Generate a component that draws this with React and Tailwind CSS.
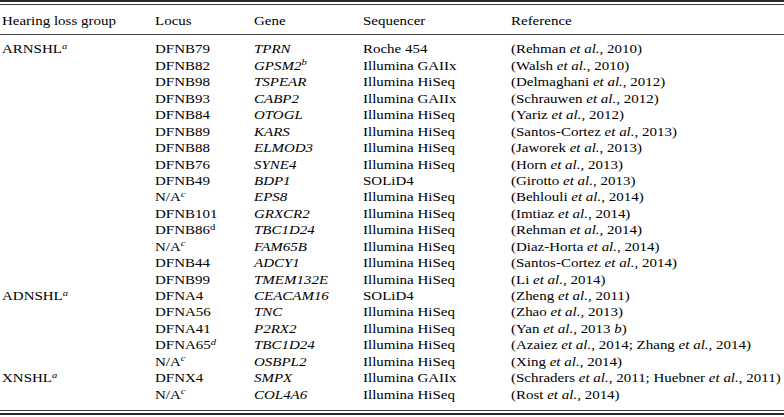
import React from 'react'

const rows = [
  { group: 'ARNSHL', locus: 'DFNB79', gene: 'TPRN', seq: 'Roche 454', refs: [['Rehman', '2010']] },
  { locus: 'DFNB82', gene: 'GPSM2', geneSup: 'b', seq: 'Illumina GAIIx', refs: [['Walsh', '2010']] },
  { locus: 'DFNB98', gene: 'TSPEAR', seq: 'Illumina HiSeq', refs: [['Delmaghani', '2012']] },
  { locus: 'DFNB93', gene: 'CABP2', seq: 'Illumina GAIIx', refs: [['Schrauwen', '2012']] },
  { locus: 'DFNB84', gene: 'OTOGL', seq: 'Illumina HiSeq', refs: [['Yariz', '2012']] },
  { locus: 'DFNB89', gene: 'KARS', seq: 'Illumina HiSeq', refs: [['Santos-Cortez', '2013']] },
  { locus: 'DFNB88', gene: 'ELMOD3', seq: 'Illumina HiSeq', refs: [['Jaworek', '2013']] },
  { locus: 'DFNB76', gene: 'SYNE4', seq: 'Illumina HiSeq', refs: [['Horn', '2013']] },
  { locus: 'DFNB49', gene: 'BDP1', seq: 'SOLiD4', refs: [['Girotto', '2013']] },
  { locus: 'N/A', locusSup: 'c', gene: 'EPS8', seq: 'Illumina HiSeq', refs: [['Behlouli', '2014']] },
  { locus: 'DFNB101', gene: 'GRXCR2', seq: 'Illumina HiSeq', refs: [['Imtiaz', '2014']] },
  { locus: 'DFNB86', locusSup: 'd', upright: true, gene: 'TBC1D24', seq: 'Illumina HiSeq', refs: [['Rehman', '2014']] },
  { locus: 'N/A', locusSup: 'c', gene: 'FAM65B', seq: 'Illumina HiSeq', refs: [['Diaz-Horta', '2014']] },
  { locus: 'DFNB44', gene: 'ADCY1', seq: 'Illumina HiSeq', refs: [['Santos-Cortez', '2014']] },
  { locus: 'DFNB99', gene: 'TMEM132E', seq: 'Illumina HiSeq', refs: [['Li', '2014']] },
  { group: 'ADNSHL', locus: 'DFNA4', gene: 'CEACAM16', seq: 'SOLiD4', refs: [['Zheng', '2011']] },
  { locus: 'DFNA56', gene: 'TNC', seq: 'Illumina HiSeq', refs: [['Zhao', '2013']] },
  { locus: 'DFNA41', gene: 'P2RX2', seq: 'Illumina HiSeq', refs: [['Yan', '2013', 'b']] },
  { locus: 'DFNA65', locusSup: 'd', gene: 'TBC1D24', seq: 'Illumina HiSeq', refs: [['Azaiez', '2014'], ['Zhang', '2014']] },
  { locus: 'N/A', locusSup: 'c', gene: 'OSBPL2', seq: 'Illumina HiSeq', refs: [['Xing', '2014']] },
  { group: 'XNSHL', locus: 'DFNX4', gene: 'SMPX', seq: 'Illumina GAIIx', refs: [['Schraders', '2011'], ['Huebner', '2011']] },
  { locus: 'N/A', locusSup: 'c', gene: 'COL4A6', seq: 'Illumina HiSeq', refs: [['Rost', '2014']] },
]

// glyphs in the scan are wider than Times, so each cell is stretched horizontally
function Cell({ children, className = '' }) {
  return (
    <div className={className}>
      <span className="inline-block whitespace-nowrap origin-left scale-x-[1.17]">{children}</span>
    </div>
  )
}

function Sup({ children, italic = true }) {
  return <sup className={`text-[70%] ${italic ? 'italic' : ''}`}>{children}</sup>
}

function Refs({ refs }) {
  return (
    <>
      (
      {refs.map(([name, year, suffix], i) => (
        <React.Fragment key={i}>
          {i > 0 && '; '}
          {name} <i>et al.</i>, {year}
          {suffix && <> <i>{suffix}</i></>}
        </React.Fragment>
      ))}
      )
    </>
  )
}

const cols = 'grid grid-cols-[155px_99px_109px_148px_1fr] h-[16.45px]'

export default function App() {
  return (
    <div className="w-[784px] h-[417px] overflow-hidden bg-white text-black font-['Liberation_Serif','Times_New_Roman',serif] text-[12.8px] leading-[16.45px]">
      <div className="border-t-2 border-[#2a2a2a]" />
      <div className="mt-[2px] border-t border-[#3a3a3a]" />
      <div className="pt-[8px] pb-[5px] border-b border-[#444]">
        <div className={cols}>
          <Cell className="pl-[2px]">Hearing loss group</Cell>
          <Cell>Locus</Cell>
          <Cell>Gene</Cell>
          <Cell>Sequencer</Cell>
          <Cell>Reference</Cell>
        </div>
      </div>
      <div className="pt-[6px] pb-[7px]">
        {rows.map((r, i) => (
          <div key={i} className={cols}>
            <Cell className="pl-[2px]">
              {r.group && <>{r.group}<Sup>a</Sup></>}
            </Cell>
            <Cell>
              {r.locus}
              {r.locusSup && <Sup italic={!r.upright}>{r.locusSup}</Sup>}
            </Cell>
            <Cell>
              <i>{r.gene}</i>
              {r.geneSup && <Sup>{r.geneSup}</Sup>}
            </Cell>
            <Cell>{r.seq}</Cell>
            <Cell>
              <Refs refs={r.refs} />
            </Cell>
          </div>
        ))}
      </div>
      <div className="border-t border-[#3a3a3a]" />
      <div className="mt-[2px] border-t-2 border-[#2a2a2a]" />
    </div>
  )
}
